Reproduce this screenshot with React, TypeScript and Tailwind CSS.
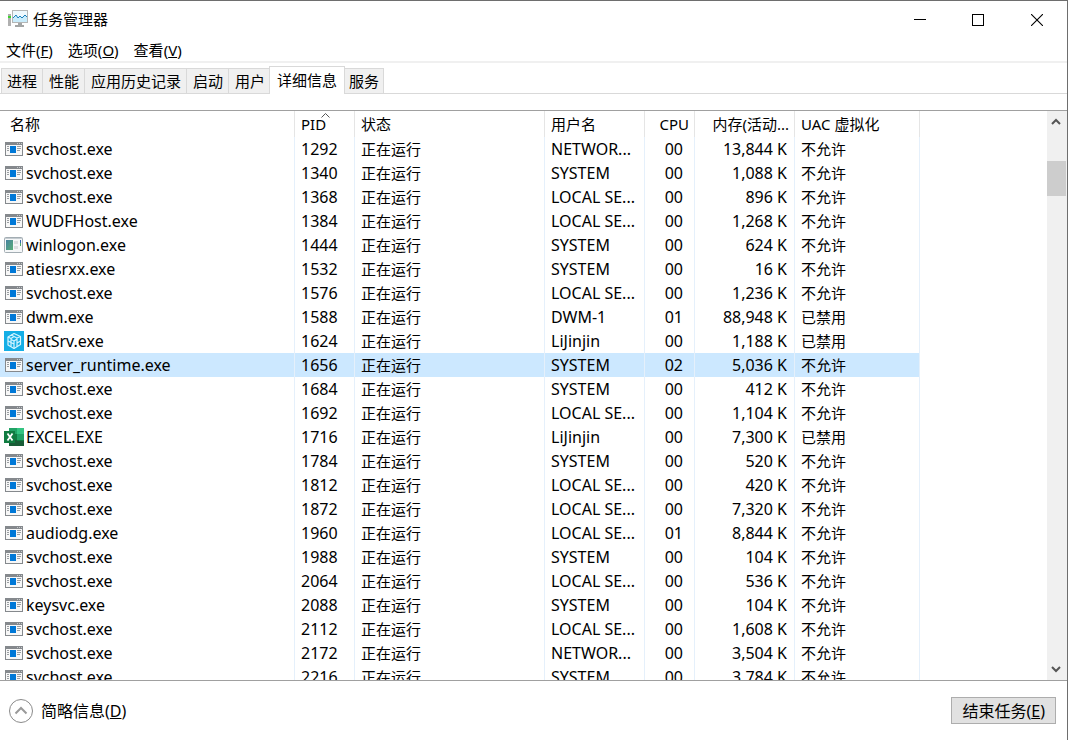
import { useState } from 'react';
import clsx from 'clsx';

type IconKind = 'exe' | 'winlogon' | 'rat' | 'excel';

interface Process {
  name: string;
  pid: number;
  user: string;
  cpu: string;
  memory: string;
  uac: string;
  icon?: IconKind;
}

const DENIED = '不允许';
const DISABLED = '已禁用';

const processes: Process[] = [
  { name: 'svchost.exe', pid: 1292, user: 'NETWOR...', cpu: '00', memory: '13,844 K', uac: DENIED },
  { name: 'svchost.exe', pid: 1340, user: 'SYSTEM', cpu: '00', memory: '1,088 K', uac: DENIED },
  { name: 'svchost.exe', pid: 1368, user: 'LOCAL SE...', cpu: '00', memory: '896 K', uac: DENIED },
  { name: 'WUDFHost.exe', pid: 1384, user: 'LOCAL SE...', cpu: '00', memory: '1,268 K', uac: DENIED },
  { name: 'winlogon.exe', pid: 1444, user: 'SYSTEM', cpu: '00', memory: '624 K', uac: DENIED, icon: 'winlogon' },
  { name: 'atiesrxx.exe', pid: 1532, user: 'SYSTEM', cpu: '00', memory: '16 K', uac: DENIED },
  { name: 'svchost.exe', pid: 1576, user: 'LOCAL SE...', cpu: '00', memory: '1,236 K', uac: DENIED },
  { name: 'dwm.exe', pid: 1588, user: 'DWM-1', cpu: '01', memory: '88,948 K', uac: DISABLED },
  { name: 'RatSrv.exe', pid: 1624, user: 'LiJinjin', cpu: '00', memory: '1,188 K', uac: DISABLED, icon: 'rat' },
  { name: 'server_runtime.exe', pid: 1656, user: 'SYSTEM', cpu: '02', memory: '5,036 K', uac: DENIED },
  { name: 'svchost.exe', pid: 1684, user: 'SYSTEM', cpu: '00', memory: '412 K', uac: DENIED },
  { name: 'svchost.exe', pid: 1692, user: 'LOCAL SE...', cpu: '00', memory: '1,104 K', uac: DENIED },
  { name: 'EXCEL.EXE', pid: 1716, user: 'LiJinjin', cpu: '00', memory: '7,300 K', uac: DISABLED, icon: 'excel' },
  { name: 'svchost.exe', pid: 1784, user: 'SYSTEM', cpu: '00', memory: '520 K', uac: DENIED },
  { name: 'svchost.exe', pid: 1812, user: 'LOCAL SE...', cpu: '00', memory: '420 K', uac: DENIED },
  { name: 'svchost.exe', pid: 1872, user: 'LOCAL SE...', cpu: '00', memory: '7,320 K', uac: DENIED },
  { name: 'audiodg.exe', pid: 1960, user: 'LOCAL SE...', cpu: '01', memory: '8,844 K', uac: DENIED },
  { name: 'svchost.exe', pid: 1988, user: 'SYSTEM', cpu: '00', memory: '104 K', uac: DENIED },
  { name: 'svchost.exe', pid: 2064, user: 'LOCAL SE...', cpu: '00', memory: '536 K', uac: DENIED },
  { name: 'keysvc.exe', pid: 2088, user: 'SYSTEM', cpu: '00', memory: '104 K', uac: DENIED },
  { name: 'svchost.exe', pid: 2112, user: 'LOCAL SE...', cpu: '00', memory: '1,608 K', uac: DENIED },
  { name: 'svchost.exe', pid: 2172, user: 'NETWOR...', cpu: '00', memory: '3,504 K', uac: DENIED },
  { name: 'svchost.exe', pid: 2216, user: 'SYSTEM', cpu: '00', memory: '3,784 K', uac: DENIED },
];

const menus = [
  { label: '文件', hotkey: 'F' },
  { label: '选项', hotkey: 'O' },
  { label: '查看', hotkey: 'V' },
];

const tabs = ['进程', '性能', '应用历史记录', '启动', '用户', '详细信息', '服务'];

function AppIcon() {
  return (
    <svg width="20" height="18" viewBox="0 0 20 18" aria-hidden="true">
      <path d="M0 4h3v12H0z" fill="#b0b0b0" />
      <path d="M0 6h3v2H0z" fill="#3fd32f" />
      <path d="M4 0h16v13H4z" fill="#b4b6b6" />
      <path d="M5 1h14v11H5z" fill="#c9ecfb" />
      <path d="M5 1h14v6l-2-2-3 3-2-2-2 2-2-3-3 3z" fill="#eef9fe" />
      <path d="M5 8l3-3 2 3 2-2 2 2 3-3 2 2" fill="none" stroke="#1b80bd" />
      <path d="M10 13h4v2h2v2H7v-2h3z" fill="#a3a5a5" />
    </svg>
  );
}

function ProcessIcon({ kind = 'exe' }: { kind?: IconKind }) {
  if (kind === 'winlogon') {
    return (
      <svg width="20" height="20" viewBox="0 0 20 20" aria-hidden="true">
        <defs>
          <linearGradient id="winlogon" x1="0" y1="0" x2="1" y2="1">
            <stop offset="0" stopColor="#4682a0" />
            <stop offset="1" stopColor="#5aaf78" />
          </linearGradient>
        </defs>
        <rect x="0.5" y="2.5" width="18" height="15" rx="1" fill="#f5f7f8" stroke="#a3adb3" />
        <path d="M1 3h17v1H1z" fill="#c5ccd1" />
        <path d="M2 5h7v10H2z" fill="url(#winlogon)" />
        <path d="M10 6h4v3h-4zM10 11h4v3h-4z" fill="#dcdfe1" />
        <path d="M16 5h1v3h-1z" fill="#3565b0" />
        <path d="M16 8h1v3h-1z" fill="#4ba66a" />
      </svg>
    );
  }
  if (kind === 'rat') {
    return (
      <svg width="20" height="20" viewBox="0 0 20 20" aria-hidden="true">
        <path d="M0 0h20v20H0z" fill="#14aee5" />
        <g fill="none" stroke="#d6f4ff" strokeWidth="1.2" strokeLinejoin="round">
          <path d="M10 2.5l6.5 3v8L10 17.500l-6-3.500V6z" />
          <path d="M4 6l3 1.500 3-2 3 1.500 3.500-1.500M7 4l5 2.500M10 10v3l-3-1.500v-3l3 1.500 3-2v4l3.500-2M4 10l3 1.500M7 11.500v4M10 13v4.500M13 12.500v3" />
        </g>
      </svg>
    );
  }
  if (kind === 'excel') {
    return (
      <svg width="20" height="20" viewBox="0 0 20 20" aria-hidden="true">
        <path d="M5 1h8v6H5z" fill="#21a366" />
        <path d="M13 1h7v6h-7z" fill="#33c481" />
        <path d="M5 7h8v6H5z" fill="#107c41" />
        <path d="M13 7h7v6h-7z" fill="#21a366" />
        <path d="M5 13h15v6H5z" fill="#185c37" />
        <path d="M13 13h7v1h-7z" fill="#107c41" />
        <path d="M0 4h11v12H0z" fill="#107c41" />
        <path d="M3.500 6.500l5 7M8.500 6.500l-5 7" stroke="#fff" strokeWidth="1.800" />
      </svg>
    );
  }
  return (
    <svg width="20" height="20" viewBox="0 0 20 20" shapeRendering="crispEdges" aria-hidden="true">
      <path d="M1 3h18v14H1z" fill="#85898d" />
      <path d="M2 6h16v10H2z" fill="#f7f7f7" />
      <path d="M13 4h1v1h-1zM15 4h1v1h-1zM17 4h1v1h-1z" fill="#c6c9cb" />
      <path d="M3 7h2v1H3zM3 9h2v1H3zM3 11h2v1H3zM13 7h4v1h-4zM13 9h4v1h-4zM13 11h3v1h-3z" fill="#9a9ea1" />
      <path d="M6 7h6v7H6z" fill="#0078d7" />
    </svg>
  );
}

function TitleBar() {
  return (
    <header className="flex h-[38px] items-center justify-between pl-2">
      <div className="flex items-center gap-[5px] pb-[2px]">
        <AppIcon />
        <h1>任务管理器</h1>
      </div>
      <div className="flex">
        <button type="button" aria-label="最小化" className="flex h-9 w-[58px] items-center justify-center">
          <svg width="12" height="12" viewBox="0 0 12 12" shapeRendering="crispEdges">
            <path d="M0 5h12v1H0z" />
          </svg>
        </button>
        <button type="button" aria-label="最大化" className="flex h-9 w-[58px] items-center justify-center">
          <svg width="12" height="12" viewBox="0 0 12 12" shapeRendering="crispEdges">
            <path d="M0.500 0.500h11v11h-11z" fill="none" stroke="#000" />
          </svg>
        </button>
        <button type="button" aria-label="关闭" className="flex h-9 w-[60px] items-center justify-center">
          <svg width="12" height="12" viewBox="0 0 12 12">
            <path d="M0 0l12 12M12 0L0 12" stroke="#000" strokeWidth="1.100" />
          </svg>
        </button>
      </div>
    </header>
  );
}

function ScrollBar() {
  return (
    <div className="flex w-5 shrink-0 flex-col justify-between bg-[#f0f0f0]">
      <button type="button" aria-label="向上滚动" className="flex h-5 w-[18px] items-center justify-center">
        <svg width="10" height="7" viewBox="0 0 10 7">
          <path d="M1 6l4-4 4 4" fill="none" stroke="#555" strokeWidth="2" />
        </svg>
      </button>
      <div className="w-full flex-1 pt-[30px]">
        <div className="h-[35px] w-[19px] bg-[#cdcdcd]" />
      </div>
      <button type="button" aria-label="向下滚动" className="flex h-[22px] w-[18px] items-center justify-center">
        <svg width="10" height="7" viewBox="0 0 10 7">
          <path d="M1 1l4 4 4-4" fill="none" stroke="#555" strokeWidth="2" />
        </svg>
      </button>
    </div>
  );
}

export default function App() {
  const [activeTab, setActiveTab] = useState('详细信息');
  const [selectedPid, setSelectedPid] = useState(1656);

  const headCell = 'border-r border-[#e5e5e5] p-0 pl-[6px] text-left font-normal';
  const cell = 'border-r border-[#e5f0fb] p-0 pl-[6px]';

  return (
    <div className="flex h-screen flex-col overflow-hidden border-t border-r border-[#6e6e6e] bg-white font-['Noto_Sans','Noto_Sans_CJK_SC',sans-serif] text-[15px] leading-[24px] text-black">
      <TitleBar />

      <nav className="flex h-[24px] items-center gap-[15px] border-b-2 border-[#f0f0f0] pl-[6px]">
        {menus.map((menu) => (
          <button key={menu.hotkey} type="button" className="leading-[22px]">
            {menu.label}(<u>{menu.hotkey}</u>)
          </button>
        ))}
      </nav>

      <div role="tablist" className="flex h-[31px] shrink-0 items-end pl-px shadow-[inset_0_-1px_0_#d9d9d9]">
        {tabs.map((tab, i) => (
          <button
            key={tab}
            type="button"
            role="tab"
            aria-selected={tab === activeTab}
            onClick={() => setActiveTab(tab)}
            className={clsx(
              'border-[#d9d9d9]',
              tab === activeTab
                ? '-ml-[2px] h-[28px] border border-b-0 bg-white px-[7px] pb-[2px]'
                : 'h-[26px] border-y border-r bg-[#f0f0f0]',
              i === 0 && tab !== activeTab && 'border-l px-[5px]',
              i > 0 && tab !== activeTab && (i === tabs.length - 1 ? 'px-[4px]' : 'pr-[5px] pl-[6px]'),
            )}
          >
            {tab}
          </button>
        ))}
      </div>

      <main className="mt-4 flex min-h-0 flex-1 border-y border-[#a0a0a0]">
        <div className="min-w-0 flex-1 overflow-hidden">
          <table className="w-[920px] table-fixed border-separate border-spacing-0">
            <colgroup>
              <col className="w-[295px]" />
              <col className="w-[60px]" />
              <col className="w-[190px]" />
              <col className="w-[100px]" />
              <col className="w-[50px]" />
              <col className="w-[100px]" />
              <col className="w-[125px]" />
            </colgroup>
            <thead>
              <tr className="h-[26px]">
                <th className="border-r border-[#e5e5e5] p-0 pl-[10px] text-left font-normal">名称</th>
                <th className={clsx(headCell, 'relative')}>
                  PID
                  <svg className="absolute top-[2px] left-[26px]" width="9" height="5" viewBox="0 0 9 5">
                    <path d="M0.500 4.500l4-4 4 4" fill="none" stroke="#555" />
                  </svg>
                </th>
                <th className={headCell}>状态</th>
                <th className={headCell}>用户名</th>
                <th className="border-r border-[#e5e5e5] p-0 pr-[5px] text-right font-normal">CPU</th>
                <th className="border-r border-[#e5e5e5] p-0 pr-[5px] text-right font-normal">内存(活动...</th>
                <th className={headCell}>UAC 虚拟化</th>
              </tr>
            </thead>
            <tbody>
              {processes.map((p) => (
                <tr
                  key={p.pid}
                  onClick={() => setSelectedPid(p.pid)}
                  className={clsx('h-[24px] text-[16px]', p.pid === selectedPid && 'bg-[#cce8ff]')}
                >
                  <td className="border-r border-[#e5f0fb] p-0 pl-1">
                    <div className="flex items-center gap-[2px]">
                      <ProcessIcon kind={p.icon} />
                      {p.name}
                    </div>
                  </td>
                  <td className={cell}>{p.pid}</td>
                  <td className={clsx(cell, 'text-[15px]')}>正在运行</td>
                  <td className={cell}>{p.user}</td>
                  <td className="border-r border-[#e5f0fb] p-0 pr-[11px] text-right">{p.cpu}</td>
                  <td className="border-r border-[#e5f0fb] p-0 pr-[7px] text-right">{p.memory}</td>
                  <td className={clsx(cell, 'text-[15px]')}>{p.uac}</td>
                </tr>
              ))}
            </tbody>
          </table>
        </div>
        <ScrollBar />
      </main>

      <footer className="flex h-[59px] shrink-0 items-center justify-between pr-[11px] pl-[9px] text-[16px]">
        <button type="button" className="flex items-center gap-2">
          <svg width="24" height="24" viewBox="0 0 24 24" fill="none">
            <circle cx="12" cy="12" r="11.500" stroke="#8a8a8a" />
            <path d="M6.500 14.500L12 9l5.500 5.500" stroke="#9a9a9a" strokeWidth="2" />
          </svg>
          <span>
            简略信息(<u>D</u>)
          </span>
        </button>
        <button type="button" className="h-[27px] border border-[#adadad] bg-[#e1e1e1] px-[10px]">
          结束任务(<u>E</u>)
        </button>
      </footer>
    </div>
  );
}
